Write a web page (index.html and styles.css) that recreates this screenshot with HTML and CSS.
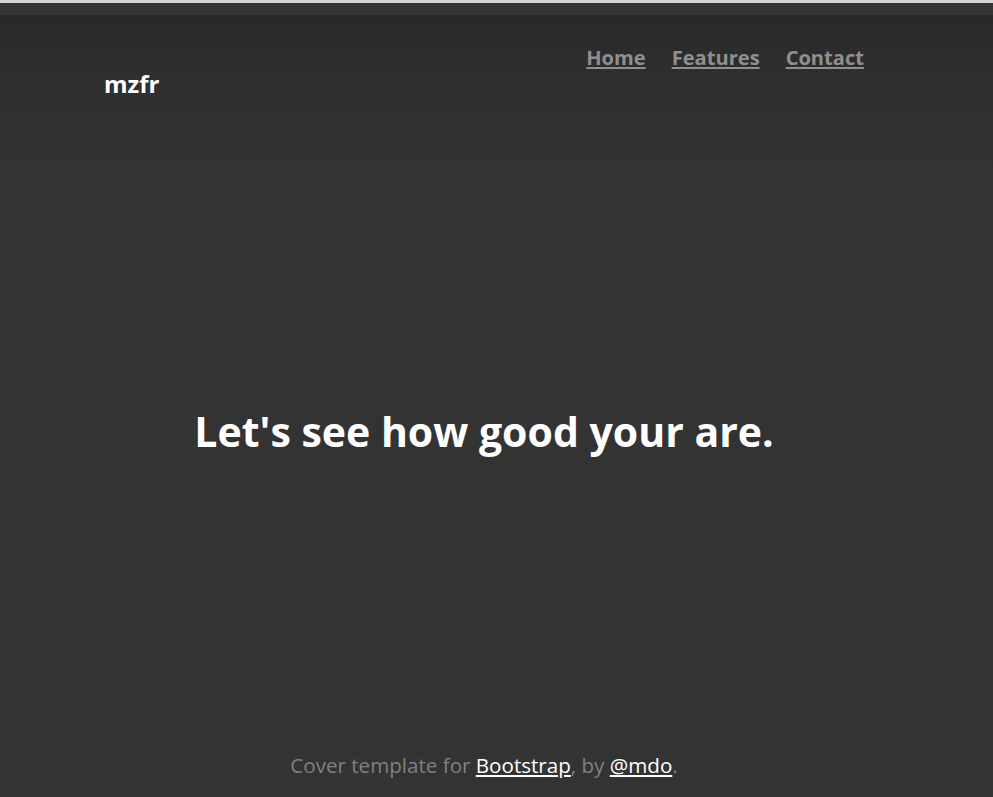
FILE: index.html
```html
<!DOCTYPE html>
<html lang="en">
<head>
<meta charset="utf-8">
<title>mzfr</title>
<link rel="stylesheet" href="styles.css">
</head>
<body>
<div class="topbar"></div>
<div class="cover">
  <div class="inner">
    <header class="masthead">
      <h3 class="brand">mzfr</h3>
      <nav class="nav">
        <a class="nav-link" href="#">Home</a>
        <a class="nav-link" href="#">Features</a>
        <a class="nav-link" href="#">Contact</a>
      </nav>
    </header>
    <main class="main">
      <h1 class="heading">Let's see how good your are.</h1>
    </main>
    <footer class="footer">
      <p>Cover template for <a href="#">Bootstrap</a>, by <a href="#">@mdo</a>.</p>
    </footer>
  </div>
</div>
</body>
</html>
```
FILE: styles.css
```css
* { box-sizing: border-box; }
html, body { margin: 0; padding: 0; }
body {
  background: #333333;
  font-family: "Open Sans", "Noto Sans", sans-serif;
  color: #ffffff;
  height: 797px;
  overflow: hidden;
}
.topbar {
  height: 15px;
  background: #353535;
  border-top: 3px solid #d3d3d3;
}
.cover {
  height: 782px;
  padding-right: 25px;
  background: linear-gradient(to bottom, #292929 0px, #2f2f2f 70px, #333333 160px, #333333 100%);
}
.inner {
  width: 760px;
  margin: 0 auto;
  height: 100%;
  display: flex;
  flex-direction: column;
}
.masthead {
  display: flex;
  justify-content: space-between;
  align-items: flex-start;
}
.brand {
  margin: 0;
  padding-top: 53px;
  font-size: 24px;
  line-height: 32px;
  font-weight: 700;
}
.nav {
  display: flex;
  gap: 26px;
  padding-top: 29px;
}
.nav-link {
  color: #8f8f8f;
  font-weight: 700;
  font-size: 20.1px;
  line-height: 28px;
  text-decoration: underline;
}
.main {
  flex: 1;
  display: flex;
  align-items: center;
  justify-content: center;
  padding-top: 10px;
}
.heading {
  margin: 0;
  font-size: 41px;
  font-weight: 700;
  line-height: 50px;
}
.footer {
  text-align: center;
  color: #808080;
  font-size: 20.6px;
  padding-bottom: 18px;
}
.footer p { margin: 0; line-height: 28px; }
.footer a { color: #ffffff; text-decoration: underline; }
```
